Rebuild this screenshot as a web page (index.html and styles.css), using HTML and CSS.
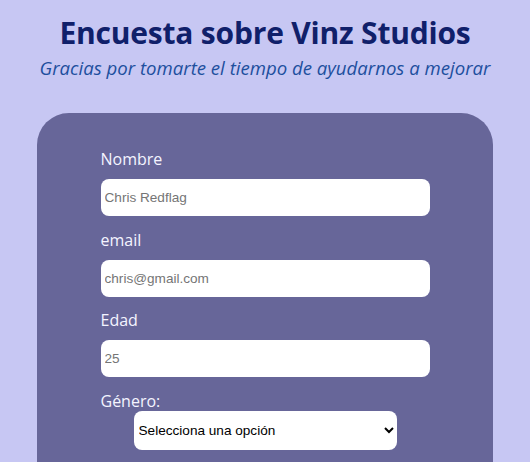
FILE: index.html
```html
<!DOCTYPE html>
<html lang="es">
<head>
<meta charset="utf-8">
<title>Encuesta sobre Vinz Studios</title>
<link rel="stylesheet" href="styles.css">
</head>
<body>
  <header class="header">
    <h1 class="title">Encuesta sobre Vinz Studios</h1>
    <p class="subtitle">Gracias por tomarte el tiempo de ayudarnos a mejorar</p>
  </header>
  <main class="card">
    <form class="form">
      <label class="label" for="name">Nombre</label>
      <input class="field" id="name" type="text" placeholder="Chris Redflag">
      <label class="label" for="email">email</label>
      <input class="field" id="email" type="email" placeholder="chris@gmail.com">
      <label class="label" for="age">Edad</label>
      <input class="field" id="age" type="number" placeholder="25">
      <label class="label label-tight" for="gender">Género:</label>
      <select class="select" id="gender">
        <option>Selecciona una opción</option>
        <option>Masculino</option>
        <option>Femenino</option>
        <option>Otro</option>
      </select>
    </form>
  </main>
</body>
</html>
```
FILE: styles.css
```css
* { box-sizing: border-box; }

body {
  margin: 0;
  background: #c7c7f3;
  font-family: "Open Sans", "Noto Sans", sans-serif;
}

.header {
  text-align: center;
  padding-top: 12px;
}

.title {
  margin: 0;
  font-size: 30px;
  line-height: 42px;
  font-weight: 700;
  letter-spacing: -0.2px;
  color: #10206a;
}

.subtitle {
  margin: 0;
  font-size: 18.6px;
  line-height: 28px;
  font-style: italic;
  color: #1d4f9e;
}

.card {
  margin: 31px 37px 0;
  background: #676699;
  border-radius: 32px 32px 0 0;
  padding: 35px 0 40px;
}

.form {
  width: 329px;
  margin: 0 auto;
  display: flex;
  flex-direction: column;
}

.label {
  display: block;
  font-size: 16px;
  line-height: 22px;
  color: #f4f4ff;
  margin-bottom: 9px;
}

.field {
  height: 37px;
  border: none;
  border-radius: 8px;
  background: #fff;
  padding: 0 4px;
  font-family: "Liberation Sans", Arial, sans-serif;
  font-size: 13.6px;
  color: #333;
  margin-bottom: 12.5px;
}

.field::placeholder { color: #757575; }

.label-tight { margin-bottom: -1px; }

.select {
  align-self: center;
  width: 263px;
  height: 39px;
  border: none;
  border-radius: 8px;
  background: #fff;
  padding: 0 1px;
  font-family: "Liberation Sans", Arial, sans-serif;
  font-size: 13.6px;
  color: #000;
}
```
